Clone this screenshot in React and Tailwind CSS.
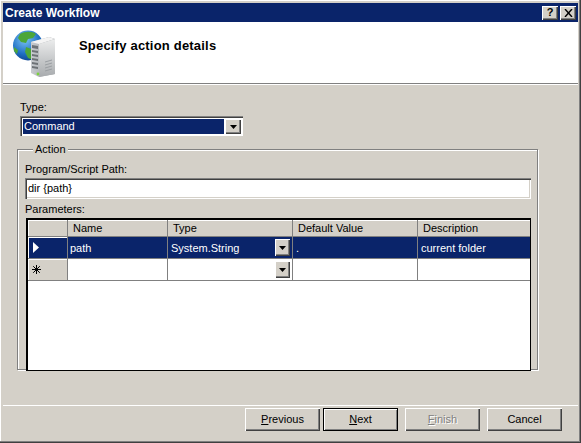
import React from 'react';

const raised = 'bg-[#d4d0c8] shadow-[inset_1px_1px_0_#fff,inset_-1px_-1px_0_#404040,inset_-2px_-2px_0_#808080]';
const sunken = 'bg-white shadow-[inset_1px_1px_0_#808080,inset_2px_2px_0_#404040,inset_-1px_-1px_0_#fff,inset_-2px_-2px_0_#d4d0c8]';

function DropArrow({ className = '' }) {
    return (
        <div className={`${raised} flex items-center justify-center ${className}`}>
            <svg width="7" height="4" viewBox="0 0 7 4"><path d="M0 0h7L3.5 4z" fill="#000" /></svg>
        </div>
    );
}

function ServerIcon() {
    return (
        <svg width="50" height="50" viewBox="0 0 50 50">
            <defs>
                <radialGradient id="globe" cx="0.4" cy="0.3" r="0.8">
                    <stop offset="0" stopColor="#7cc4f5" />
                    <stop offset="0.6" stopColor="#1f6fc4" />
                    <stop offset="1" stopColor="#0c3a82" />
                </radialGradient>
                <linearGradient id="front" x1="0" y1="0" x2="1" y2="0">
                    <stop offset="0" stopColor="#c9ccd0" />
                    <stop offset="1" stopColor="#8f9498" />
                </linearGradient>
                <linearGradient id="side" x1="0" y1="0" x2="0" y2="1">
                    <stop offset="0" stopColor="#eceded" />
                    <stop offset="1" stopColor="#a8abae" />
                </linearGradient>
            </defs>
            <circle cx="15" cy="15.5" r="15" fill="url(#globe)" />
            <path d="M7 4c5-3 12-3 16 0l-3 4-5 1-2 4-5-1-3-4zM13 17l8 3 3 5-4 5-5-2-3-6zM1 17l4 3-1 4-3-3z" fill="#4ca63a" />
            <path d="M18 12l18-5 6 2v35l-16 3-8-4z" fill="url(#front)" />
            <path d="M18 12l18-5 6 2-16 5z" fill="#f4f4f4" />
            <path d="M26 14l16-5v35l-16 3z" fill="url(#side)" />
            <path d="M19 15l6 1v3l-6-1zM19 20l6 1v2l-6-1zM19 24l6 1v2l-6-1zM19 28l6 1v2l-6-1zM19 32l6 1v2l-6-1zM19 36l6 1v2l-6-1z" fill="#6d7276" />
            <path d="M32 32l7-2M32 35l7-2M32 38l7-2M32 41l7-2" stroke="#9a9ea2" strokeWidth="1" />
            <circle cx="25" cy="44" r="1.4" fill="#7bd13f" />
        </svg>
    );
}

function WizardButton({ children, className = '', strong, disabled }) {
    return (
        <div className={`w-[75px] h-[23px] flex items-center justify-center ${strong ? 'border border-black shadow-[inset_1px_1px_0_#fff,inset_-1px_-1px_0_#808080] bg-[#d4d0c8]' : raised} ${disabled ? 'text-[#808080] [text-shadow:1px_1px_0_#fff]' : ''} ${className}`}>
            {children}
        </div>
    );
}

export default function App() {
    return (
        <div className="w-[581px] h-[443px] flex flex-col bg-[#d4d0c8] text-[11px] text-black border-r border-b border-[#404040] font-['Liberation_Sans',sans-serif] overflow-hidden">
            <div className="flex-1 flex flex-col min-h-0 border-r border-b border-[#808080] shadow-[inset_1px_1px_0_#fff]">
                <div className="flex-1 flex flex-col min-h-0 mt-[3px] ml-[3px] mb-[1px] mr-[1px]">
                    {/* Title bar */}
                    <div className="h-[19px] shrink-0 bg-[#0a246a] flex items-center justify-between pl-[2px] pr-[2px]">
                        <span className="text-white font-bold text-[12px]">Create Workflow</span>
                        <div className="flex gap-[2px]">
                            <div className={`${raised} w-[16px] h-[14px] flex items-center justify-center font-bold text-[11px] leading-none`}>?</div>
                            <div className={`${raised} w-[16px] h-[14px] flex items-center justify-center`}>
                                <svg width="9" height="8" viewBox="0 0 9 8"><path d="M1 0l7 8M8 0L1 8" stroke="#000" strokeWidth="1.4" fill="none" /></svg>
                            </div>
                        </div>
                    </div>

                    {/* Header */}
                    <div className="h-[62px] shrink-0 bg-white flex items-center border-b border-[#808080] shadow-[0_1px_0_#fff]">
                        <div className="ml-[10px] w-[50px] h-[50px] shrink-0 mt-[5px]"><ServerIcon /></div>
                        <h1 className="ml-[16px] -mt-[13px] font-bold text-[13px] tracking-[0.2px]">Specify action details</h1>
                    </div>

                    {/* Body */}
                    <div className="flex-1 min-h-0 pl-[14px] pr-[40px] pt-[17px]">
                        <div className="pl-[3px] leading-[13px] h-[15px]">Type:</div>
                        <div className="ml-[3px] w-[223px] h-[20px] bg-white flex items-stretch p-[3px] pb-[2px] pr-[2px] shadow-[inset_1px_1px_0_#808080,inset_2px_2px_0_#404040]">
                            <div className="flex-1 bg-[#0a246a] text-white flex items-center pl-[1px]">Command</div>
                            <DropArrow className="w-[16px] ml-[1px]" />
                        </div>

                        <fieldset className="mt-[7px] h-[227px] border border-[#808080] shadow-[inset_1px_1px_0_#fff,1px_1px_0_#fff] pl-[7px] pr-[5px]">
                            <legend className="ml-[8px] px-[2px] bg-[#d4d0c8] leading-[13px]">Action</legend>
                            <div className="mt-[7px] leading-[13px] h-[15px]">Program/Script Path:</div>
                            <div className={`${sunken} h-[21px] w-[506px] flex items-center pl-[3px]`}>dir {'{path}'}</div>
                            <div className="mt-[3px] h-[16px] leading-[15px]">Parameters:</div>
                            <div className="ml-[1px] w-[505px] h-[153px] bg-white border-t-2 border-l-2 border-black border-r border-b">
                                <div className="grid grid-cols-[40px_100px_125px_125px_1fr] h-[17px] bg-[#d4d0c8] border-b border-[#808080]">
                                    <div className="border-r border-[#808080] shadow-[inset_1px_1px_0_#fff]" />
                                    <div className="border-r border-[#808080] shadow-[inset_0_1px_0_#fff] pl-[5px] leading-[16px]">Name</div>
                                    <div className="border-r border-[#808080] shadow-[inset_0_1px_0_#fff] pl-[5px] leading-[16px]">Type</div>
                                    <div className="border-r border-[#808080] shadow-[inset_0_1px_0_#fff] pl-[5px] leading-[16px]">Default Value</div>
                                    <div className="shadow-[inset_0_1px_0_#fff] pl-[5px] leading-[16px]">Description</div>
                                </div>
                                <div className="grid grid-cols-[40px_100px_125px_125px_1fr] h-[22px] border-b border-[#808080]">
                                    <div className="bg-[#0a246a] border-r border-[#808080] flex items-center pl-[5px] shadow-[inset_1px_1px_0_#fff]">
                                        <svg width="6" height="11" viewBox="0 0 6 11"><path d="M0 0l6 5.5L0 11z" fill="#fff" /></svg>
                                    </div>
                                    <div className="bg-[#0a246a] text-white border-r border-[#808080] flex items-center pl-[2px] pt-[1px]">path</div>
                                    <div className="bg-[#0a246a] text-white border-r border-[#808080] flex items-center justify-between pl-[3px] pr-[2px]">
                                        <span className="pt-[1px]">System.String</span>
                                        <DropArrow className="w-[15px] h-[17px]" />
                                    </div>
                                    <div className="bg-[#0a246a] text-white border-r border-[#808080] flex items-center pl-[3px] pt-[1px]">.</div>
                                    <div className="bg-[#0a246a] text-white flex items-center pl-[3px] pt-[1px]">current folder</div>
                                </div>
                                <div className="grid grid-cols-[40px_100px_125px_125px_1fr] h-[22px] border-b border-[#808080]">
                                    <div className="bg-[#d4d0c8] border-r border-[#808080] flex items-center pl-[4px] shadow-[inset_1px_1px_0_#fff]">
                                        <svg width="9" height="9" viewBox="0 0 9 9"><path d="M4.5 0v9M0 4.5h9M1.2 1.2l6.6 6.6M7.8 1.2L1.2 7.8" stroke="#000" strokeWidth="1" /></svg>
                                    </div>
                                    <div className="border-r border-[#808080]" />
                                    <div className="border-r border-[#808080] flex items-center justify-end pr-[2px]">
                                        <DropArrow className="w-[15px] h-[17px]" />
                                    </div>
                                    <div className="border-r border-[#808080]" />
                                    <div />
                                </div>
                            </div>
                        </fieldset>
                    </div>

                    {/* Footer */}
                    <div className="h-[35px] shrink-0 border-t border-white flex justify-end pr-[16px] pt-[2px]">
                        <WizardButton><span><u>P</u>revious</span></WizardButton>
                        <WizardButton className="ml-[3px]" strong><span><u>N</u>ext</span></WizardButton>
                        <WizardButton className="ml-[7px]" disabled><span><u>F</u>inish</span></WizardButton>
                        <WizardButton className="ml-[7px]">Cancel</WizardButton>
                    </div>
                </div>
            </div>
        </div>
    );
}
